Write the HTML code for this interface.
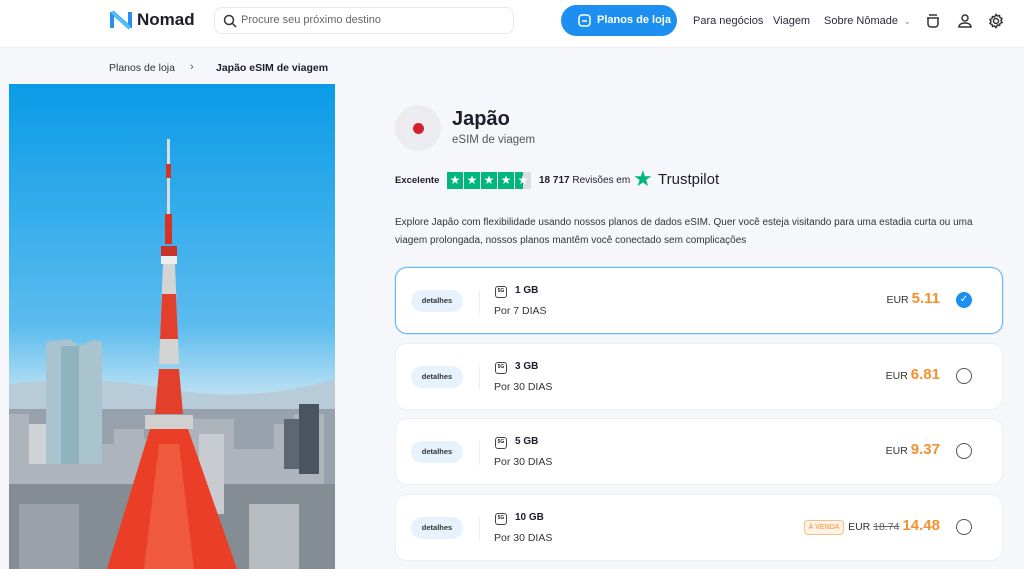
<!DOCTYPE html>
<html><head><meta charset="utf-8"><style>
*{box-sizing:border-box;margin:0;padding:0}
body{width:1024px;height:569px;overflow:hidden;background:#f6f7fb;font-family:"Liberation Sans",sans-serif;color:#1d1d2b;position:relative}
.hdr{position:absolute;left:0;top:0;width:1024px;height:48px;background:#fff;border-bottom:1px solid #eceef3}
.abs{position:absolute;white-space:nowrap}
.search{left:214px;top:7px;width:300px;height:27px;border:1px solid #e6e8ee;border-radius:8px;background:#fff}
.btn{left:561px;top:5px;width:116px;height:31px;border-radius:16px;background:#1d8ff0;color:#fff;font-weight:bold;font-size:11px}
.nav{font-size:11px;color:#2a2a3a;top:15px}
.card{position:absolute;left:395px;width:608px;height:67px;background:#fff;border:1px solid #eceef3;border-radius:12px}
.card.sel{border:1px solid #6ab7f1;box-shadow:0 0 0 1px #d7ebfb}
.det{position:absolute;left:15px;top:22px;width:52px;height:22px;border-radius:11px;background:#e8f2fd;font-size:7.5px;font-weight:bold;color:#333;text-align:center;line-height:22px}
.sep{position:absolute;left:83px;top:22px;width:1px;height:24px;background:#eceef3}
.g5{position:absolute;left:99px;top:18px;width:12px;height:12px;border:1.5px solid #444;border-radius:3px;font-size:5px;font-weight:bold;text-align:center;line-height:9px}
.gb{position:absolute;left:119px;top:17px;font-size:10px;font-weight:bold}
.days{position:absolute;left:98px;top:37px;font-size:10.5px;color:#333}
.price{position:absolute;right:62px;top:22px;font-size:10.5px;color:#333;white-space:nowrap}
.price b{font-size:15px;color:#f5902f;margin-left:3px}
.radio{position:absolute;right:30px;top:24px;width:16px;height:16px;border:1.5px solid #555;border-radius:50%}
</style></head><body>
<div class="hdr">
 <svg class="abs" style="left:109px;top:9px" width="24" height="22" viewBox="0 0 24 22"><path d="M3 3 L3 19 M3 3 L21 19 M21 3 L21 19" stroke="#2a8ff0" stroke-width="4" fill="none" stroke-linejoin="round"/><path d="M3 3 L21 19" stroke="#4fc3f7" stroke-width="3"/></svg>
 <div class="abs" style="left:137px;top:10px;font-size:17px;font-weight:bold;color:#1d1d2b">Nomad</div>
 <div class="abs search"><svg class="abs" style="left:8px;top:6px" width="14" height="14" viewBox="0 0 14 14"><circle cx="6" cy="6" r="4.5" stroke="#333" stroke-width="1.5" fill="none"/><path d="M9.5 9.5L13 13" stroke="#333" stroke-width="1.5"/></svg><span class="abs" style="left:26px;top:6px;font-size:11px;color:#666">Procure seu próximo destino</span></div>
 <div class="abs btn"><svg class="abs" style="left:17px;top:9px" width="13" height="13" viewBox="0 0 13 13"><rect x="1" y="1" width="11" height="11" rx="3" stroke="#fff" stroke-width="1.5" fill="none"/><path d="M4 7h5" stroke="#fff" stroke-width="1.5"/></svg><span class="abs" style="left:36px;top:9px">Planos de loja</span></div>
 <div class="abs nav" style="left:693px">Para negócios</div>
 <div class="abs nav" style="left:773px">Viagem</div>
 <div class="abs nav" style="left:824px">Sobre Nômade <span style="font-size:8px;color:#888;margin-left:3px">⌄</span></div>
 <svg class="abs" style="left:925px;top:13px" width="16" height="16" viewBox="0 0 16 16" fill="none" stroke="#333" stroke-width="1.5"><path d="M4 2h8M2 5h12M3 5v6a3 3 0 003 3h4a3 3 0 003-3V5"/></svg>
 <svg class="abs" style="left:957px;top:13px" width="16" height="16" viewBox="0 0 16 16" fill="none" stroke="#333" stroke-width="1.5"><circle cx="8" cy="5" r="3"/><path d="M2 14c0-3 3-4 6-4s6 1 6 4z"/></svg>
 <svg class="abs" style="left:988px;top:13px" width="16" height="16" viewBox="0 0 16 16" fill="none" stroke="#333" stroke-width="1.5"><circle cx="8" cy="8" r="2.5"/><path d="M8 1.5l1.5 1.5 2-.5.5 2 2 1-1 2 1 2-2 1-.5 2-2-.5L8 14.5 6.5 13l-2 .5-.5-2-2-1 1-2-1-2 2-1 .5-2 2 .5z"/></svg>
</div>
<div class="abs" style="left:109px;top:62px;font-size:10.5px;color:#333">Planos de loja</div>
<div class="abs" style="left:190px;top:61px;font-size:11px;color:#555">›</div>
<div class="abs" style="left:216px;top:62px;font-size:10.5px;font-weight:bold">Japão eSIM de viagem</div>

<svg class="abs" style="left:9px;top:84px" width="326" height="485" viewBox="0 0 326 485">
 <defs><linearGradient id="sky" x1="0" y1="0" x2="0" y2="1"><stop offset="0" stop-color="#0a9be8"/><stop offset=".5" stop-color="#5cbcee"/><stop offset=".62" stop-color="#aedcf3"/><stop offset=".68" stop-color="#cfe3ee"/></linearGradient></defs>
 <rect width="326" height="485" fill="url(#sky)"/>
 <path d="M0 300 Q80 290 160 305 T326 295 V340 H0Z" fill="#b7cbd9"/>
 <rect x="0" y="325" width="326" height="160" fill="#98a2ad"/>
 <path d="M0 330h20v20h15v-10h30v20h40v-15h30v10h30v-20h60v30h40v-25h20v-10h30V485H0Z" fill="#adb4bb"/>
 <rect x="0" y="400" width="326" height="85" fill="#858d94"/>
 <rect x="190" y="350" width="25" height="80" fill="#c8ccd0"/><rect x="275" y="335" width="35" height="50" fill="#5e6670"/><rect x="290" y="320" width="20" height="70" fill="#4a5360"/>
 <rect x="20" y="340" width="25" height="40" fill="#cfd3d7"/><rect x="10" y="420" width="60" height="65" fill="#9aa1a8"/><rect x="240" y="420" width="50" height="65" fill="#b6bcc1"/>
 <path d="M37 258 L60 255 L70 262 L85 256 L93 258 L93 380 L37 380Z" fill="#a9c4cf"/><rect x="52" y="262" width="18" height="118" fill="#8fb3bf"/>
 <path d="M158 55 L161 55 L161 150 L158 150Z" fill="#ddd"/>
 <rect x="157" y="80" width="5" height="14" fill="#d63326"/><rect x="156" y="130" width="7" height="30" fill="#d63326"/>
 <rect x="152" y="162" width="16" height="10" fill="#c9342a"/><rect x="152" y="172" width="16" height="8" fill="#eee"/>
 <path d="M154 180h12l4 100h-20z" fill="#d4d4d4"/>
 <path d="M153 210h14l2 45h-18z" fill="#e2402c"/>
 <path d="M150 285h20l4 45h-28z" fill="#e2402c"/>
 <rect x="136" y="331" width="48" height="14" fill="#d0d0d0"/>
 <path d="M141 345 L179 345 L228 485 L98 485Z" fill="#ea3f26"/>
 <path d="M150 360 L170 360 L185 485 L135 485Z" fill="#f26a4b" opacity=".6"/>
</svg>

<div class="abs" style="left:395px;top:105px;width:46px;height:46px;border-radius:50%;background:#ececf0"><div class="abs" style="left:18px;top:18px;width:11px;height:11px;border-radius:50%;background:#d4202c"></div></div>
<div class="abs" style="left:452px;top:108px;font-size:20px;font-weight:bold">Japão</div>
<div class="abs" style="left:452px;top:134px;font-size:11.5px;color:#555">eSIM de viagem</div>
<div class="abs" style="left:395px;top:175px;font-size:9.5px;font-weight:bold">Excelente</div>
<div class="abs" style="left:447px;top:172px;width:84px;height:17px;display:flex;gap:1px">
 <div style="flex:1;background:#00b67a;color:#fff;font-size:12px;text-align:center;line-height:17px">★</div><div style="flex:1;background:#00b67a;color:#fff;font-size:12px;text-align:center;line-height:17px">★</div><div style="flex:1;background:#00b67a;color:#fff;font-size:12px;text-align:center;line-height:17px">★</div><div style="flex:1;background:#00b67a;color:#fff;font-size:12px;text-align:center;line-height:17px">★</div><div style="flex:1;background:linear-gradient(90deg,#00b67a 50%,#dcdce6 50%);color:#fff;font-size:12px;text-align:center;line-height:17px">★</div>
</div>
<div class="abs" style="left:539px;top:175px;font-size:10px"><b>18 717</b> Revisões em</div>
<div class="abs" style="left:633px;top:166px;font-size:22px;color:#00b67a">★</div>
<div class="abs" style="left:658px;top:171px;font-size:15px;color:#1d1d2b">Trustpilot</div>
<div class="abs" style="left:395px;top:214px;width:600px;font-size:10px;line-height:18px;color:#333;white-space:normal">Explore Japão com flexibilidade usando nossos planos de dados eSIM. Quer você esteja visitando para uma estadia curta ou uma viagem prolongada, nossos planos mantêm você conectado sem complicações</div>

<div class="card sel" style="top:267px"><div class="det">detalhes</div><div class="sep"></div><div class="g5">5G</div><div class="gb">1 GB</div><div class="days">Por 7 DIAS</div><div class="price">EUR<b>5.11</b></div><div class="radio" style="background:#1d8ff0;border-color:#1d8ff0;color:#fff;font-size:10px;text-align:center;line-height:13px">✓</div></div>
<div class="card" style="top:343px"><div class="det">detalhes</div><div class="sep"></div><div class="g5">5G</div><div class="gb">3 GB</div><div class="days">Por 30 DIAS</div><div class="price">EUR<b>6.81</b></div><div class="radio"></div></div>
<div class="card" style="top:418px"><div class="det">detalhes</div><div class="sep"></div><div class="g5">5G</div><div class="gb">5 GB</div><div class="days">Por 30 DIAS</div><div class="price">EUR<b>9.37</b></div><div class="radio"></div></div>
<div class="card" style="top:494px"><div class="det">detalhes</div><div class="sep"></div><div class="g5">5G</div><div class="gb">10 GB</div><div class="days">Por 30 DIAS</div><div class="abs" style="left:408px;top:25px;width:40px;height:15px;border:1px solid #f5c08a;background:#fff3e6;border-radius:4px;font-size:7px;color:#f5902f;text-align:center;line-height:13px">À VENDA</div><div class="price">EUR <s style="color:#666">18.74</s><b>14.48</b></div><div class="radio"></div></div>
</body></html>
